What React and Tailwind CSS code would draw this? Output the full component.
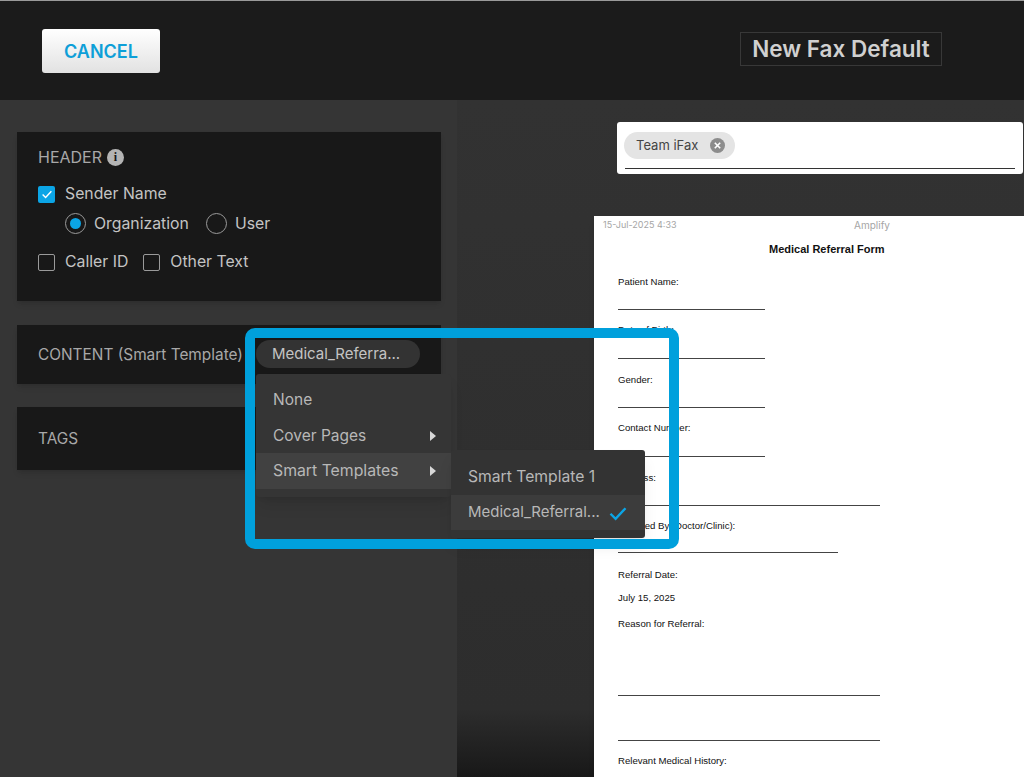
import React from 'react';

const ui = "font-['Inter','Liberation_Sans',sans-serif]";

const Tick = ({ className }) => (
    <svg viewBox="0 0 16 16" className={className} fill="none" stroke="currentColor" strokeWidth="1.6">
        <path d="M3 8.5l3.4 3.4L13 4.8" />
    </svg>
);

const Check = ({ label, checked }) => (
    <div className="flex items-center gap-[10px]">
        {checked ? (
            <span className="w-[17px] h-[17px] bg-[#0ba5e6] rounded-[2px] flex items-center justify-center text-white">
                <Tick className="w-[14px] h-[14px]" />
            </span>
        ) : (
            <span className="w-[17px] h-[17px] border-[1.5px] border-[#9a9a9a] rounded-[2px]"></span>
        )}
        <span className="text-[15.8px] leading-5 text-[#c4c4c4]">{label}</span>
    </div>
);

const Radio = ({ label, checked }) => (
    <div className="flex items-center gap-[8px]">
        <span className="w-[21px] h-[21px] border-[1.5px] border-[#9a9a9a] rounded-full flex items-center justify-center">
            {checked && <span className="w-[11px] h-[11px] bg-[#0ba5e6] rounded-full"></span>}
        </span>
        <span className="text-[15.8px] leading-5 text-[#c4c4c4]">{label}</span>
    </div>
);

const Arrow = () => (
    <svg viewBox="0 0 6 10" className="w-[6px] h-[10px] fill-[#d8d8d8]">
        <path d="M0 0l6 5-6 5z" />
    </svg>
);

// one line of the form: label at its row height, then optional rule
const Row = ({ h, label, rule, ruleW = 'w-[147px]' }) => (
    <div className={`flex flex-col ${h}`}>
        {label && <div className="text-[9.6px] leading-3 text-[#111]">{label}</div>}
        {rule && <div className={`mt-auto h-px bg-[#444] ${ruleW}`}></div>}
    </div>
);

const App = () => {
    return (
        <div className={`${ui} relative w-[1024px] h-[777px] overflow-hidden flex flex-col bg-[#333]`}>
            <header className="h-[100px] shrink-0 bg-[#1b1b1b] border-t border-[#9a9a9a] flex items-start justify-between pl-[42px] pr-[82px] pt-[28px]">
                <button className="w-[118px] h-[44px] rounded-[3px] bg-gradient-to-b from-white to-[#e2e2e2] text-[#0e9fd8] text-[18px] font-semibold">
                    CANCEL
                </button>
                <div className="mt-[3px] w-[202px] h-[34px] border border-[#383838] flex items-center justify-center text-[22.5px] font-semibold text-[#d0d0d0]">
                    New Fax Default
                </div>
            </header>

            <div className="flex flex-1 min-h-0">
                <aside className="w-[457px] shrink-0 bg-[#353535] pt-[32px] pl-[17px] pr-[16px] flex flex-col">
                    <section className="h-[169px] bg-[#181818] shadow-md pl-[21px] pt-[15px]">
                        <div className="flex items-center gap-[5px] text-[16px] leading-5 text-[#a8a8a8]">
                            HEADER
                            <span className="w-[17px] h-[17px] rounded-full bg-[#b4b4b4] text-[#181818] text-[12px] font-bold flex items-center justify-center font-['Liberation_Serif',serif]">i</span>
                        </div>
                        <div className="mt-[17px]">
                            <Check label="Sender Name" checked />
                        </div>
                        <div className="flex gap-[17px] ml-[27px] mt-[9px]">
                            <Radio label="Organization" checked />
                            <Radio label="User" />
                        </div>
                        <div className="flex gap-[15px] mt-[18px]">
                            <Check label="Caller ID" />
                            <Check label="Other Text" />
                        </div>
                    </section>

                    <section className="mt-[24px] h-[59px] bg-[#181818] shadow-md pl-[21px] flex items-start">
                        <span className="text-[15.4px] leading-5 text-[#a8a8a8] mt-[20px]">CONTENT (Smart Template)</span>
                    </section>

                    <section className="mt-[23px] h-[63px] bg-[#181818] shadow-md pl-[21px] flex items-center">
                        <span className="text-[15.4px] leading-5 text-[#a8a8a8]">TAGS</span>
                    </section>
                </aside>

                <main className="flex-1 bg-[linear-gradient(to_bottom,#323232_0%,#2d2d2d_90%,#181818_100%)] pt-[22px] flex flex-col">
                    <div className="ml-[160px] w-[406px] h-[52px] bg-white rounded-[3px] px-[8px] pt-[10px] shrink-0">
                        <div className="h-[37px] border-b border-[#333]">
                            <div className="inline-flex items-center gap-[12px] h-[27px] -ml-px pl-[12px] pr-[10px] rounded-full bg-[#e4e4e4] text-[13px] text-[#444]">
                                <span className="mt-[1px]">Team iFax</span>
                                <span className="w-[15px] h-[15px] rounded-full bg-[#8c8c8c] text-white flex items-center justify-center">
                                    <svg viewBox="0 0 10 10" className="w-[9px] h-[9px]" stroke="currentColor" strokeWidth="1.8">
                                        <path d="M2 2l6 6M8 2l-6 6" />
                                    </svg>
                                </span>
                            </div>
                        </div>
                    </div>

                    <div className="ml-[137px] mt-[42px] flex-1 min-h-0 bg-white font-['Liberation_Sans',Arial,sans-serif] pl-[24px] shadow-md">
                        <div className="-ml-[15px] pt-[3px] h-[17px] flex text-[9px] leading-3 text-[#a5a5a5] font-['Inter',sans-serif]">
                            <span className="w-[251px]">15-Jul-2025 4:33</span>
                            <span className="text-[10px]">Amplify</span>
                        </div>
                        <div className="ml-[151px] text-[11px] leading-4 font-bold text-[#111] mt-[8px]">
                            Medical Referral Form
                        </div>
                        <Row h="h-[34px] mt-[19px]" label="Patient Name:" rule />
                        <Row h="h-[49px] pt-[14px]" label="Date of Birth:" rule />
                        <Row h="h-[49px] pt-[15px]" label="Gender:" rule />
                        <Row h="h-[49px] pt-[14px]" label="Contact Number:" rule />
                        <Row h="h-[49px] pt-[15px]" label="Address:" rule ruleW="w-[262px]" />
                        <Row h="h-[47px] pt-[14px]" label="Referred By (Doctor/Clinic):" rule ruleW="w-[220px]" />
                        <Row h="h-[28px] pt-[16px]" label="Referral Date:" />
                        <Row h="h-[23px] pt-[11px]" label="July 15, 2025" />
                        <Row h="h-[92px] pt-[14px]" label="Reason for Referral:" rule ruleW="w-[262px]" />
                        <Row h="h-[45px]" rule ruleW="w-[262px]" />
                        <Row h="h-[36px] pt-[14px]" label="Relevant Medical History:" />
                    </div>
                </main>
            </div>

            {/* value pill and open dropdown sit over the cards */}
            <div className="absolute left-[256px] top-[340px] w-[164px] h-[28px] rounded-full bg-[#333] pl-[16px] flex items-center text-[15px] text-[#c4c4c4]">
                Medical_Referra...
            </div>

            <div className="absolute left-[256px] top-[374px] w-[195px] h-[123px] bg-[#353535] rounded-[3px] shadow-lg pt-[8px] text-[15.5px] text-[#b8b8b8]">
                <div className="h-[36px] pl-[17px] flex items-center">None</div>
                <div className="h-[35px] pl-[17px] pr-[15px] flex items-center justify-between">
                    Cover Pages <Arrow />
                </div>
                <div className="h-[36px] pl-[17px] pr-[15px] bg-[#414141] flex items-center justify-between">
                    <span className="text-[15.8px]">Smart Templates</span> <Arrow />
                </div>
            </div>

            <div className="absolute left-[451px] top-[450px] w-[194px] h-[88px] bg-[#333] rounded-[3px] shadow-lg pt-[9px] text-[15px] text-[#b8b8b8]">
                <div className="h-[36px] pl-[17px] flex items-center text-[15.7px]">Smart Template 1</div>
                <div className="h-[35px] pl-[17px] pr-[15px] bg-[#3c3c3c] flex items-center justify-between">
                    Medical_Referral...
                    <Tick className="w-[24px] h-[24px] text-[#0ba5e6]" />
                </div>
            </div>

            {/* highlight frame drawn on top of the screenshot */}
            <div className="absolute left-[245px] top-[328px] w-[434px] h-[221px] border-[10px] border-[#00a0dc] rounded-[10px] pointer-events-none"></div>
        </div>
    );
};

export default App;
